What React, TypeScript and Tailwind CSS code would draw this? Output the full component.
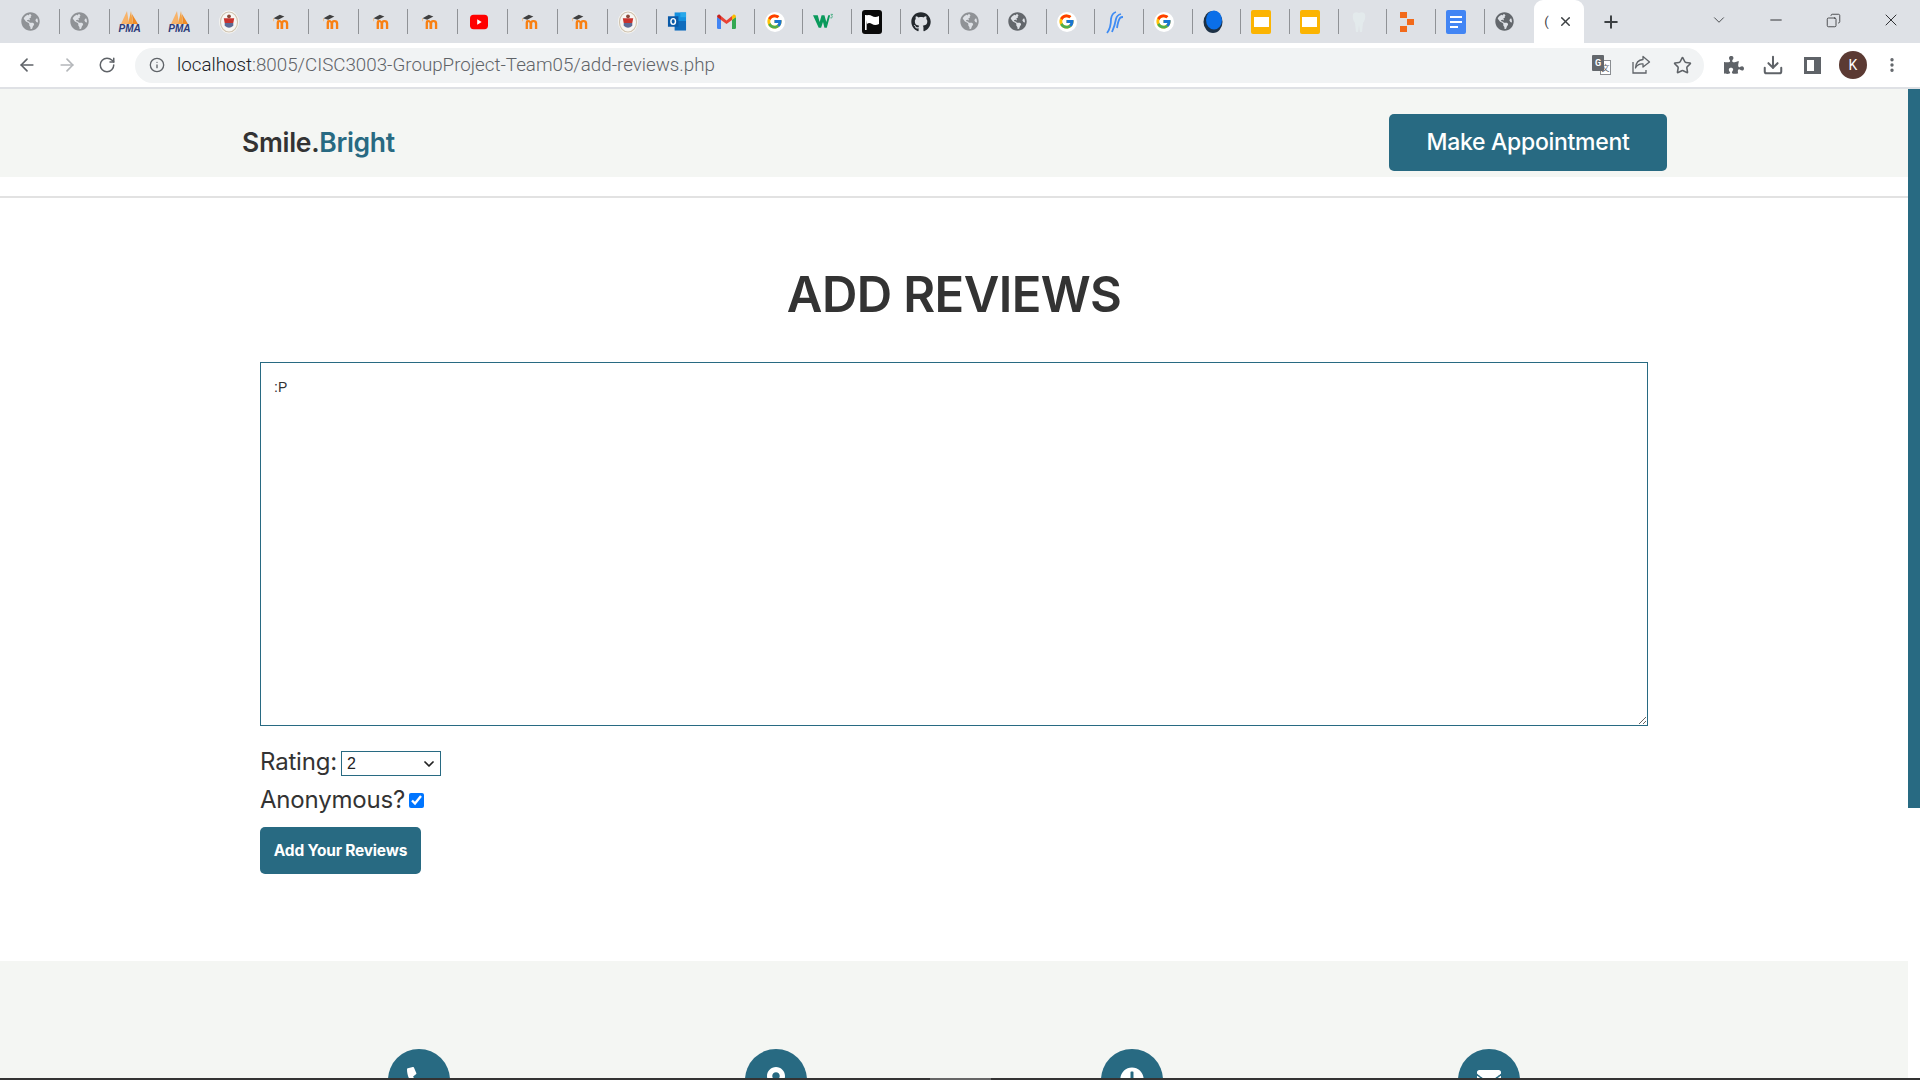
import React from "react";
import { ArrowLeft, ArrowRight, ChevronDown, Copy, Download, Info, Minus, MoreVertical, Plus, RotateCw, Star, X } from "lucide-react";
import { FaClock, FaEnvelope, FaGithub, FaGlobeAmericas, FaMapMarkerAlt, FaPhoneAlt, FaPuzzlePiece } from "react-icons/fa";
import { FcGoogle } from "react-icons/fc";

const TEAL = "#286a82";

function Globe({ light }: { light?: boolean }) {
  return <FaGlobeAmericas size={19} className={light ? "text-[#8f9296]" : "text-[#63676c]"} />;
}

function Pma() {
  return (
    <span className="flex flex-col items-center leading-none">
      <svg width="19" height="13" viewBox="0 0 19 13">
        <path d="M7 0 L9 13 L1 13 Z" fill="#f7b36a" />
        <path d="M11 0 L13 13 L8 13 Z" fill="#f5a344" />
        <path d="M12 3 L18 13 L13 13 Z" fill="#f08a24" />
      </svg>
      <span className="text-[10px] font-bold italic leading-[9px] text-[#2c3a78] font-['Liberation_Sans',sans-serif]">PMA</span>
    </span>
  );
}

function Crest() {
  return (
    <svg width="21" height="24" viewBox="0 0 21 24">
      <ellipse cx="10.5" cy="12" rx="10.5" ry="12" fill="#f7f6f3" />
      <ellipse cx="10.5" cy="12" rx="9" ry="10.5" fill="none" stroke="#cfc3b0" strokeWidth="1.2" />
      <path d="M5 8 L16 8 L15 13 L6 13 Z" fill="#c8332e" />
      <path d="M6 13 H15 V16 Q10.5 20 6 16 Z" fill="#5d6a94" />
      <circle cx="10.5" cy="6" r="2" fill="#8a4a3a" />
    </svg>
  );
}

function Moodle() {
  return (
    <svg width="22" height="20" viewBox="0 0 22 20" className="ml-[3px]">
      <path d="M2 5 L10 0.5 L16 3 L8 7 Z" fill="#3f3f3f" />
      <path d="M2 5 V9" stroke="#f9b26a" strokeWidth="1" />
      <path d="M6 19 V10.5 Q6 7.5 9 7.5 Q11.5 7.5 12.5 9 Q13.5 7.5 16 7.5 Q21 7.5 21 12 V19 H18 V12 Q18 10 16 10 Q14.5 10 14.5 12 V19 H11 V12 Q11 10 10 10 Q9 10 9 12 V19 Z" fill="#f98012" />
    </svg>
  );
}

function Youtube() {
  return (
    <svg width="20" height="16" viewBox="0 0 20 16" className="ml-[2px]">
      <rect width="20" height="16" y="0" rx="4" fill="#f00" />
      <path d="M8 5 L13 8 L8 11 Z" fill="#fff" />
    </svg>
  );
}

function Outlook() {
  return (
    <svg width="21" height="21" viewBox="0 0 21 21">
      <rect x="8" y="1" width="12" height="9" fill="#1490df" />
      <rect x="14" y="1" width="6" height="5" fill="#28a8ea" />
      <path d="M8 10 H20 V20 H8 Z" fill="#0f6cbd" />
      <rect x="1" y="5" width="11" height="11" fill="#0a5aa8" />
      <ellipse cx="6.5" cy="10.5" rx="2.4" ry="3" fill="none" stroke="#fff" strokeWidth="1.5" />
    </svg>
  );
}

function Gmail() {
  return (
    <svg width="19" height="15" viewBox="0 0 19 15">
      <path d="M0 3 L4 5.5 V15 H1.3 Q0 15 0 13.5 Z" fill="#4285f4" />
      <path d="M19 3 L15 5.5 V15 H17.7 Q19 15 19 13.5 Z" fill="#34a853" />
      <path d="M4 2 L9.5 6.5 L15 2 V6 L9.5 10 L4 6 Z" fill="#ea4335" />
      <path d="M0 3 Q0 0 2.5 0.5 L4 2 V6 L0 3 Z" fill="#c5221f" />
      <path d="M19 3 Q19 0 16.5 0.5 L15 2 V6 L19 3 Z" fill="#fbbc04" />
    </svg>
  );
}

function GoogleIcon() {
  return (
    <span className="flex h-5 w-5 items-center justify-center rounded-full bg-white">
      <FcGoogle size={17} />
    </span>
  );
}

function W3() {
  return (
    <svg width="21" height="17" viewBox="0 0 21 17">
      <path d="M0 2 H5 L7 9 L9 2 H12 L14 9 L16 2 H18 L14.5 15 H12 L10.5 9 L8.5 15 H6 Z" fill="#0a9a5c" />
      <path d="M18.5 1 H20.5 L19.5 2.6 Q20.8 3.2 19.8 4.6 Q19 5.2 18.2 4.6" fill="none" stroke="#0a9a5c" strokeWidth="0.7" />
    </svg>
  );
}

function FlagIcon() {
  return (
    <svg width="20" height="24" viewBox="0 0 20 24">
      <rect width="20" height="24" rx="3" fill="#0a0a0a" />
      <path d="M3 6 Q7 4 10 6 T17 6 V14 Q13 16 10 14 T5 14 Z" fill="#fff" />
      <rect x="3" y="5" width="1.6" height="15" fill="#fff" />
    </svg>
  );
}

function Swoosh() {
  return (
    <svg width="18" height="24" viewBox="0 0 18 24" fill="none" stroke="#3f8cf3" strokeWidth="1.8">
      <path d="M1 23 Q5 18 5 9 Q6 3 10 2" />
      <path d="M6 22 Q9 15 10 9 Q11 5 15 4" />
      <path d="M11 18 Q12 11 14 8 Q15 7 17 7" />
    </svg>
  );
}

function Moon() {
  return (
    <svg width="20" height="24" viewBox="0 0 20 24">
      <ellipse cx="10" cy="12" rx="9.5" ry="11" fill="#1d3146" />
      <ellipse cx="11" cy="10" rx="8" ry="9.5" fill="#0b6fe8" />
    </svg>
  );
}

function Slides() {
  return (
    <span className="flex h-6 w-5 items-center justify-center rounded-[2px] bg-[#fbb402]">
      <span className="h-[10px] w-[15px] bg-white" />
    </span>
  );
}

function Tooth() {
  return (
    <svg width="14" height="22" viewBox="0 0 14 22">
      <path d="M1 3 Q3 0 7 2 Q11 0 13 3 Q14 8 11 12 L10 21 L8 21 L7 14 L6 21 L4 21 L3 12 Q0 8 1 3 Z" fill="#e3eaec" />
    </svg>
  );
}

function Blocks() {
  return (
    <svg width="14" height="20" viewBox="0 0 14 20">
      <rect x="0" y="0" width="7" height="6" fill="#f26a1b" />
      <rect x="7" y="7" width="7" height="6" fill="#f26a1b" />
      <rect x="0" y="14" width="7" height="6" fill="#f26a1b" />
    </svg>
  );
}

function Docs() {
  return (
    <span className="flex h-6 w-5 flex-col justify-center gap-[3px] rounded-[2px] bg-[#4285f4] px-[4px]">
      <span className="h-[2px] w-full bg-white" />
      <span className="h-[2px] w-full bg-white" />
      <span className="h-[2px] w-[8px] bg-white" />
    </span>
  );
}

function TranslateIcon() {
  return (
    <span className="relative h-[20px] w-[19px]">
      <span className="absolute bottom-0 right-0 flex h-[15px] w-[11px] items-center justify-center border border-[#8a8d91] bg-white text-[8px] leading-none text-[#5f6368] font-['Noto_Sans_CJK_SC',sans-serif]">文</span>
      <span className="absolute left-0 top-0 flex h-[16px] w-[12px] items-center justify-center rounded-[1px] bg-[#63676c] text-[9px] font-bold leading-none text-white font-['Roboto',sans-serif]">G</span>
    </span>
  );
}

function ShareIcon() {
  return (
    <svg width="19" height="19" viewBox="0 0 19 19" fill="none" stroke="#5f6368" strokeWidth="1.3" className="ml-[21px]">
      <path d="M1 7 V18 H14 V15" />
      <path d="M11 1.5 L17.5 7 L11 12 V9 Q6 8.5 3.5 13 Q4 5 11 4.5 Z" strokeLinejoin="round" />
    </svg>
  );
}

const TABS: React.ReactNode[] = [
  <Globe light />,
  <Globe light />,
  <Pma />,
  <Pma />,
  <Crest />,
  <Moodle />,
  <Moodle />,
  <Moodle />,
  <Moodle />,
  <Youtube />,
  <Moodle />,
  <Moodle />,
  <Crest />,
  <Outlook />,
  <Gmail />,
  <GoogleIcon />,
  <W3 />,
  <FlagIcon />,
  <FaGithub size={20} className="text-[#24292e]" />,
  <Globe light />,
  <Globe />,
  <GoogleIcon />,
  <Swoosh />,
  <GoogleIcon />,
  <Moon />,
  <Slides />,
  <Slides />,
  <Tooth />,
  <Blocks />,
  <Docs />,
  <Globe />,
];

function TabStrip() {
  return (
    <div className="flex h-[43px] items-center bg-[#dee1e6] pl-[9px]">
      {TABS.map((icon, i) => (
        <div
          key={i}
          className={`flex h-[25px] shrink-0 items-center border-l border-[#8f9296] pl-[10px] ${i < 13 ? "w-[49.8px]" : "w-[48.67px]"} ${i === 0 ? "border-transparent" : ""}`}
        >
          <span className="flex w-5 justify-center">{icon}</span>
        </div>
      ))}
      <div className="ml-[2px] flex h-[43px] w-[50px] shrink-0 items-center gap-[9px] self-end rounded-t-[9px] bg-white pl-[10px]">
        <span className="text-[13px] text-[#3c4043] font-['Roboto',sans-serif]">(</span>
        <X size={15} strokeWidth={2.4} className="text-[#3c4043]" />
      </div>
      <Plus size={20} strokeWidth={2.4} className="ml-[17px] text-[#3c4043]" />
      <ChevronDown size={18} strokeWidth={1.2} className="ml-[89px] -mt-[4px] text-[#3c4043]" />
      <Minus size={18} strokeWidth={1.2} className="ml-[39px] -mt-[3px] text-[#202124]" />
      <Copy size={15} strokeWidth={1.2} className="ml-[41px] -mt-[3px] -scale-x-100 text-[#202124]" />
      <X size={20} strokeWidth={1.1} className="ml-[40px] -mt-[3px] text-[#202124]" />
    </div>
  );
}

function Toolbar() {
  return (
    <div className="flex h-[46px] items-center border-b-2 border-[#dfe1e5] bg-white">
      <ArrowLeft size={20} strokeWidth={2} className="ml-[17px] text-[#5f6368]" />
      <ArrowRight size={20} strokeWidth={2} className="ml-[20px] text-[#b4b7ba]" />
      <RotateCw size={18} strokeWidth={2} className="ml-[21px] text-[#5f6368]" />
      <div className="ml-[19px] flex h-[35px] w-[1569px] items-center rounded-full bg-[#f1f3f4]">
        <Info size={16} strokeWidth={2} className="ml-[14px] text-[#5f6368]" />
        <span className="ml-[12px] pt-[1px] text-[18.75px] font-light text-[#5f6368] font-['Roboto',sans-serif]">
          <span className="text-[#202124]">localhost</span>:8005/CISC3003-GroupProject-Team05/add-reviews.php
        </span>
        <span className="ml-auto flex">
          <TranslateIcon />
          <ShareIcon />
        </span>
        <Star size={19} strokeWidth={2} className="ml-[22px] mr-[12px] text-[#5f6368]" />
      </div>
      <FaPuzzlePiece size={20} className="ml-[20px] text-[#5f6368]" />
      <Download size={22} strokeWidth={2.2} className="ml-[18px] text-[#5f6368]" />
      <div className="ml-[20px] h-[17px] w-[17px] border-[3px] border-r-[7px] border-[#5f6368] bg-white" />
      <span className="ml-[18px] flex h-7 w-7 items-center justify-center rounded-full bg-[#5b3a33] text-[14px] text-white font-['Roboto',sans-serif]">K</span>
      <MoreVertical size={18} strokeWidth={2.5} className="ml-[16px] text-[#5f6368]" />
    </div>
  );
}

function Footer() {
  const icons = [FaPhoneAlt, FaMapMarkerAlt, FaClock, FaEnvelope];
  return (
    <footer className="bg-[#f4f6f3] pt-[88px] pb-[60px]">
      <div className="mx-auto grid w-[1426px] grid-cols-4">
        {icons.map((Icon, i) => (
          <div key={i} className="flex justify-center">
            <span className="flex h-[62px] w-[62px] items-start justify-center rounded-full bg-[#286a82] pt-[18px] text-white">
              <Icon size={24} />
            </span>
          </div>
        ))}
      </div>
    </footer>
  );
}

function ReviewForm() {
  return (
    <form className="mx-auto w-[1388px] text-[24px] text-[#333] font-['Inter',sans-serif]">
      <textarea
        readOnly
        value=":P"
        className="block h-[364px] w-full border border-[#286a82] px-[13px] py-[14px] text-[14px] text-[#333] font-['Liberation_Sans',sans-serif] outline-none"
      />
      <div className="mt-[21px] flex h-[30px] items-center gap-[4px]">
        <label className="tracking-[-0.2px]">Rating:</label>
        <div className="relative mt-[2px]">
          <select
            defaultValue="2"
            className="block h-[25px] w-[100px] appearance-none border border-[#286a82] bg-white pl-[5px] text-[16px] text-[#222] font-['Liberation_Sans',sans-serif]"
          >
            {[1, 2, 3, 4, 5].map((n) => (
              <option key={n} value={n}>{n}</option>
            ))}
          </select>
          <ChevronDown size={16} strokeWidth={2.6} className="pointer-events-none absolute right-[4px] top-[5px] text-[#222]" />
        </div>
      </div>
      <div className="mt-[8px] flex h-[30px] items-center gap-[4px]">
        <label className="tracking-[-0.2px]">Anonymous?</label>
        <input type="checkbox" defaultChecked className="h-[15px] w-[15px] accent-[#0075ff]" />
      </div>
      <button
        type="button"
        className="mt-[12px] block h-[47px] w-[161px] rounded-[5px] bg-[#286a82] text-[15.5px] font-bold tracking-[-0.2px] text-white"
      >
        Add Your Reviews
      </button>
    </form>
  );
}

export default function App() {
  return (
    <div className="flex h-[1080px] flex-col overflow-hidden bg-white font-['Inter',sans-serif]">
      <TabStrip />
      <Toolbar />
      <div className="flex min-h-0 flex-1">
        <main className="min-w-0 flex-1 overflow-hidden">
          <header className="flex h-[88px] items-center justify-between bg-[#f4f6f3] pl-[242px] pr-[241px] pt-[19px]">
            <h1 className="text-[26.5px] font-semibold tracking-[-0.3px] text-[#333]">
              Smile.<span style={{ color: TEAL }}>Bright</span>
            </h1>
            <button type="button" className="h-[57px] w-[278px] rounded-[5px] bg-[#286a82] text-[23px] font-medium tracking-[-0.3px] text-white">
              Make Appointment
            </button>
          </header>
          <div className="mt-[19px] h-[2px] bg-[#e2e2e2]" />
          <h2 className="mt-[67px] text-center text-[49px] font-semibold leading-[60px] tracking-[-0.6px] text-[#333]">ADD REVIEWS</h2>
          <div className="mt-[37px]">
            <ReviewForm />
          </div>
          <div className="mt-[87px]">
            <Footer />
          </div>
        </main>
        <div className="w-[12px] shrink-0 bg-white">
          <div className="h-[719px] bg-[#286a82]" />
        </div>
      </div>
      <div className="flex h-[2px] shrink-0 bg-[#333]">
        <div className="ml-[930px] h-full w-[61px] bg-[#666]" />
      </div>
    </div>
  );
}
